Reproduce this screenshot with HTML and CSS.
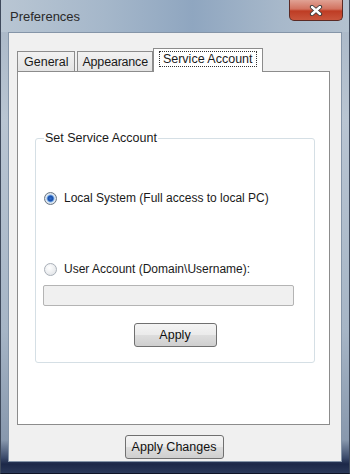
FILE: index.html
```html
<!DOCTYPE html>
<html lang="en">
<head>
    <meta charset="UTF-8">
    <title>Preferences</title>
    <link rel="stylesheet" href="styles.css">
</head>
<body>
    <div class="window">
        <div class="titlebar">
            <span class="title">Preferences</span>
            <button class="close" type="button" aria-label="Close">
                <svg width="14" height="11" viewBox="0 0 14 11">
                    <path d="M3 2 L11 9 M11 2 L3 9" stroke="#3a3a3a" stroke-width="4.2" stroke-linecap="round"/>
                    <path d="M3 2 L11 9 M11 2 L3 9" stroke="#ffffff" stroke-width="2.4" stroke-linecap="round"/>
                </svg>
            </button>
        </div>

        <div class="client">
            <div class="tabs">
                <div class="tab">General</div>
                <div class="tab narrow">Appearance</div>
                <div class="tab active"><span class="focus">Service Account</span></div>
            </div>

            <div class="panel">
                <fieldset class="group">
                    <legend>Set Service Account</legend>

                    <label class="radio first">
                        <span class="dot checked"></span>
                        Local System (Full access to local PC)
                    </label>

                    <label class="radio second">
                        <span class="dot"></span>
                        User Account (Domain\Username):
                    </label>

                    <input class="field" type="text" disabled>

                    <div class="row">
                        <button class="btn small" type="button">Apply</button>
                    </div>
                </fieldset>
            </div>

            <div class="footer">
                <button class="btn wide" type="button">Apply Changes</button>
            </div>
        </div>
    </div>
</body>
</html>
```

FILE: styles.css
```css
body {
    margin: 0;
    font-family: "Liberation Sans", Arial, sans-serif;
    font-size: 12px;
    color: #1a1a1a;
}
.window {
    width: 350px;
    height: 474px;
    box-sizing: border-box;
    display: flex;
    flex-direction: column;
    background: linear-gradient(180deg, #a8b6c6 0px, #b9c5d2 120px, #a6b5c6 330px, #8898ad 440px, #3a4a6a 458px, #1c2848 464px, #2c3a5a 474px);
    border-left: 1px solid #3f4a5c;
    border-right: 1px solid #3f4a5c;
    border-bottom: 1px solid #0e1426;
}
.titlebar {
    height: 32px;
    display: flex;
    justify-content: space-between;
    align-items: flex-start;
    background: linear-gradient(90deg, #b9c6d3 0%, #a5b7ca 30%, #8fa6c0 55%, #a7b8ca 80%, #b3c1cf 100%);
}
.title {
    margin: 9px 0 0 9px;
    font-family: "Liberation Sans", Arial, sans-serif;
    font-size: 13px;
    color: #2a2a2a;
}
.close {
    width: 54px;
    height: 21px;
    margin-right: 6px;
    padding: 0;
    border: 1px solid #5a2a24;
    border-top: none;
    border-radius: 0 0 5px 5px;
    background: linear-gradient(180deg, #e0a294 0%, #d2725f 45%, #be3c24 55%, #c9553c 100%);
    display: flex;
    align-items: center;
    justify-content: center;
}
.client {
    flex: 1;
    margin: 0 7px 11px 7px;
    background: #f0f0f0;
    border: 1px solid #8595a8;
    display: flex;
    flex-direction: column;
    padding: 14px 11px 0 8px;
}
.tabs {
    display: flex;
    align-items: flex-end;
    height: 24px;
    position: relative;
    z-index: 1;
}
.tab {
    height: 19px;
    padding: 0 6px;
    line-height: 20px;
    background: linear-gradient(180deg, #f2f2f2, #e4e4e4);
    border: 1px solid #8c8c8c;
    border-bottom: none;
    margin-right: 2px;
    font-size: 12.5px;
}
.tab.narrow {
    padding: 0 4px;
    letter-spacing: -0.2px;
}
.tab.active {
    height: 23px;
    line-height: 21px;
    background: #ffffff;
    margin: 0 0 -1px -2px;
    padding: 0 5px;
}
.focus {
    border: 1px dotted #333;
    padding: 0 3px;
}
.panel {
    height: 354px;
    background: #ffffff;
    border: 1px solid #8c8c8c;
    padding: 59px 14px 0 17px;
    box-sizing: border-box;
}
.group {
    margin: 0;
    height: 232px;
    box-sizing: border-box;
    border: 1px solid #d5dfe5;
    border-radius: 3px;
    padding: 0 0 0 7px;
    display: flex;
    flex-direction: column;
}
.group legend {
    padding: 0 1px;
    margin-left: 1px;
    font-size: 12.5px;
}
.radio {
    display: flex;
    align-items: center;
    gap: 7px;
    padding-left: 1px;
    font-size: 12px;
}
.radio.first {
    margin-top: 46px;
}
.radio.second {
    margin-top: 57px;
}
.dot {
    width: 11px;
    height: 11px;
    border-radius: 50%;
    border: 1px solid #a9b0b8;
    background: radial-gradient(circle at 40% 35%, #ffffff, #dcdfe3);
}
.dot.checked {
    border-color: #6b7784;
    background: radial-gradient(circle at 50% 50%, #2f6fd0 0, #1a4ea8 2.5px, #7fb2ec 3.5px, #e8edf2 4.5px, #c9d1da 6px);
}
.field {
    width: 251px;
    height: 21px;
    box-sizing: border-box;
    margin-top: 9px;
    border: 1px solid #b4b4b4;
    border-radius: 2px;
    background: #f0f0f0;
}
.row {
    display: flex;
    justify-content: center;
    margin-top: 17px;
    padding-right: 7px;
}
.btn {
    height: 24px;
    border: 1px solid #707070;
    border-radius: 3px;
    background: linear-gradient(180deg, #f4f4f4 0%, #ebebeb 48%, #dddddd 52%, #cfcfcf 100%);
    font-family: "Liberation Sans", Arial, sans-serif;
    font-size: 12.5px;
    color: #111;
    padding: 0;
}
.btn.small {
    width: 83px;
}
.btn.wide {
    width: 99px;
}
.footer {
    display: flex;
    justify-content: center;
    margin-top: 10px;
    padding-left: 1px;
}
```
